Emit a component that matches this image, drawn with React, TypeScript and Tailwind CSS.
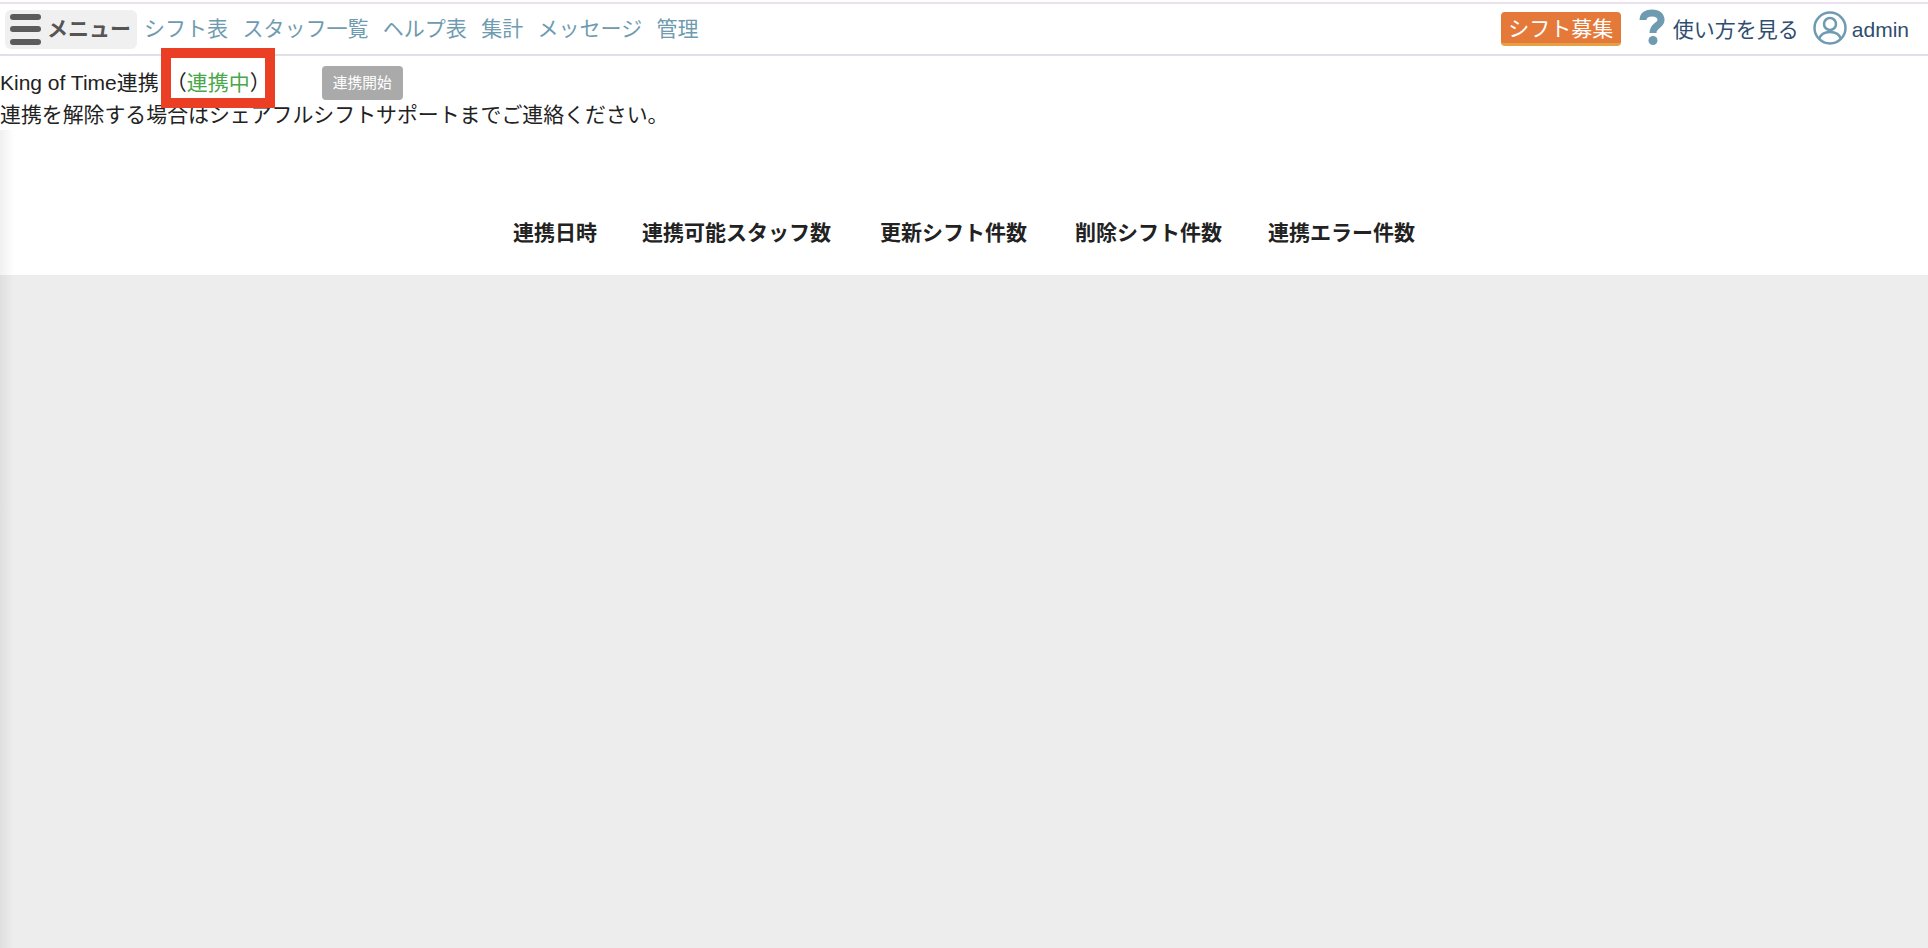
import React from "react";

const font = { fontFamily: '"Liberation Sans","Noto Sans CJK JP",sans-serif' };
const nav = ["シフト表", "スタッフ一覧", "ヘルプ表", "集計", "メッセージ", "管理"];

export default function App() {
  return (
    <div style={font} className="relative flex h-[948px] w-[1928px] flex-col overflow-hidden bg-white pt-[2px] text-[21px] text-[#222]">
      <header className="flex h-[54px] shrink-0 items-center justify-between border-t-[2px] border-b-2 border-t-[#ebe2f0] border-b-[#e2e0e6] pl-[5px] pr-[19px]">
        <div className="flex items-center">
          <div className="flex h-[39px] w-[132px] items-center gap-[6px] rounded-md bg-[#f0f0f0] pl-[5px] text-[#555]">
            <div className="flex w-[31px] flex-col gap-[6.5px]">
              <span className="h-[6px] rounded-full bg-[#5c5c5c]" />
              <span className="h-[6px] rounded-full bg-[#5c5c5c]" />
              <span className="h-[6px] rounded-full bg-[#5c5c5c]" />
            </div>
            <span className="whitespace-nowrap text-[21px] font-bold">メニュー</span>
          </div>
          <nav className="ml-[7px] flex gap-[14.4px] text-[21px] text-[#6f9bb0]">
            {nav.map((n) => (
              <span key={n} className="whitespace-nowrap">{n}</span>
            ))}
          </nav>
        </div>
        <div className="flex items-center">
          <div className="flex h-[34px] w-[120px] items-center justify-center rounded-[4px] border-b-[3px] border-[#e5a044] bg-[#e5793a] pt-[2px] text-[21px] whitespace-nowrap text-white">
            シフト募集
          </div>
          <svg className="ml-[18px] -translate-y-[2px]" width="26" height="36" viewBox="0 0 26 36">
            <path d="M4 11 C4 6 8 4 13 4 C19 4 22 7 22 11 C22 17 14 16 14 24" fill="none" stroke="#6f9bb0" strokeWidth="7" />
            <circle cx="14" cy="31.5" r="4.5" fill="#6f9bb0" />
          </svg>
          <span className="ml-[8px] whitespace-nowrap pt-[1px] text-[21px] text-[#2f4d6e]">使い方を見る</span>
          <svg className="ml-[14px] -translate-y-[1px]" width="34" height="34" viewBox="0 0 34 34" fill="none" stroke="#6f9bb0" strokeWidth="2.5">
            <circle cx="17" cy="17" r="15.5" />
            <circle cx="17" cy="13" r="6" />
            <path d="M6 28 C8 22 12 21 17 21 C22 21 26 22 28 28" />
          </svg>
          <span className="ml-[5px] pt-[2px] text-[21px] text-[#2f4d6e]">admin</span>
        </div>
      </header>

      <section className="h-[219px] shrink-0 pt-[10px]">
        <div className="flex h-[34px] items-center">
          <span className="whitespace-nowrap">King of Time連携</span>
          <span className="ml-[7px] whitespace-nowrap">（<span className="text-[#4aa84a]">連携中</span>）</span>
          <button className="ml-[51px] flex h-[34px] w-[81px] items-center justify-center rounded-[4px] bg-[#aaaaaa] text-[14.7px] whitespace-nowrap text-white">
            連携開始
          </button>
        </div>
        <p className="whitespace-nowrap text-[20.9px] leading-[30px]">連携を解除する場合はシェアフルシフトサポートまでご連絡ください。</p>
        <div className="mt-[87px] flex font-bold whitespace-nowrap text-[#222]">
          <span className="ml-[513px]">連携日時</span>
          <span className="ml-[45px]">連携可能スタッフ数</span>
          <span className="ml-[49px]">更新シフト件数</span>
          <span className="ml-[48px]">削除シフト件数</span>
          <span className="ml-[46px]">連携エラー件数</span>
        </div>
      </section>

      <div className="flex-1 bg-[#ededed]" />

      <div className="pointer-events-none absolute top-[130px] bottom-0 left-0 w-[14px] bg-gradient-to-r from-black/[0.06] to-transparent" />
      <div className="pointer-events-none absolute top-[48px] left-[161px] h-[60px] w-[114px] border-[10px] border-[#ea3f24]" />
    </div>
  );
}
